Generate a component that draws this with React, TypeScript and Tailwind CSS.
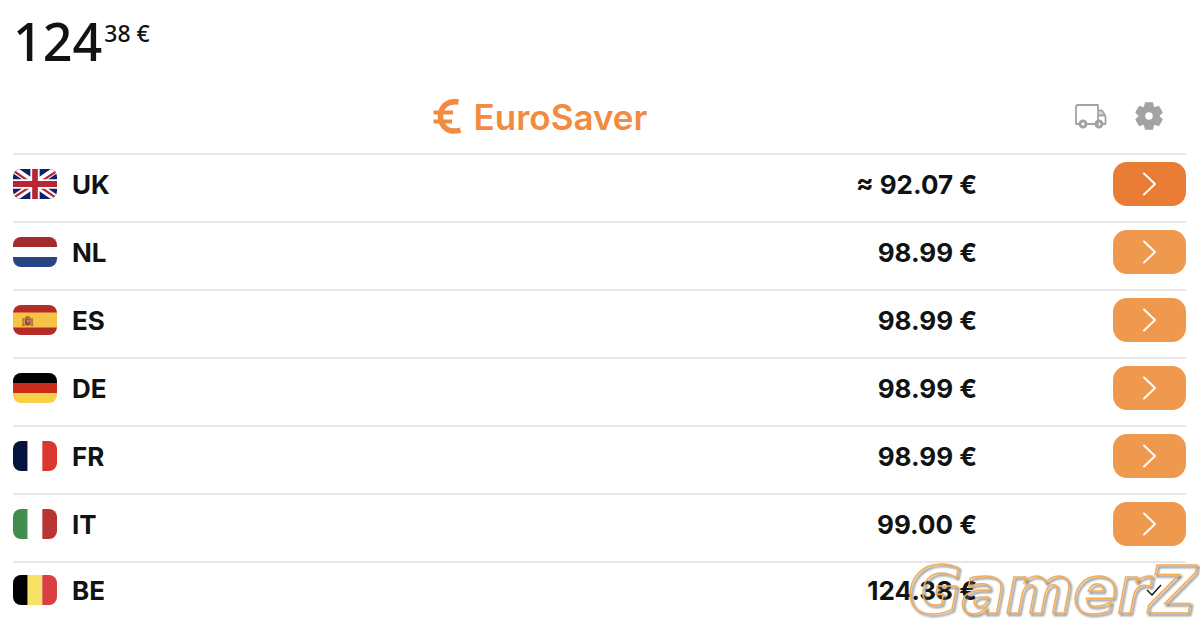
import type { ReactNode } from "react";

type Offer = { code: string; price: string; flag: ReactNode; best?: boolean; current?: boolean };

function Stripes({ colors, vertical }: { colors: string[]; vertical?: boolean }) {
  return (
    <>
      {colors.map((c, i) =>
        vertical ? (
          <rect key={i} x={i * 15} y="0" width="15" height="30" fill={c} />
        ) : (
          <rect key={i} x="0" y={i * 10} width="45" height="10" fill={c} />
        ),
      )}
    </>
  );
}

function UnionJack() {
  return (
    <>
      <rect width="45" height="30" fill="#10206a" />
      <path d="M0 0L45 30M45 0L0 30" stroke="#fff" strokeWidth="7" />
      <path d="M0 1.5L17 13M28 18L45 29.5M45 2L28 13M17 18L0 29" stroke="#b82633" strokeWidth="2.2" />
      <path d="M22.5 0V30M0 15H45" stroke="#fff" strokeWidth="9.5" />
      <path d="M22.5 0V30M0 15H45" stroke="#b82633" strokeWidth="5.8" />
    </>
  );
}

function Spain() {
  return (
    <>
      <rect width="45" height="30" fill="#b52b28" />
      <rect y="7.5" width="45" height="15" fill="#f6c445" />
      <path d="M12 12.5q3-3.5 6 0v2h-6z" fill="#b5703a" />
      <path d="M9.5 13h2v7.5h-2zM18.5 13h2v7.5h-2z" fill="#b87a48" />
      <path d="M12 14h6v4.5c0 3-6 3-6 0z" fill="#a6453a" />
      <circle cx="15.5" cy="16" r="1.5" fill="#9a8fa8" />
      <path d="M9 20.5h3M18 20.5h3" stroke="#7c7470" strokeWidth="1.2" />
    </>
  );
}

const offers: Offer[] = [
  { code: "UK", price: "≈ 92.07 €", flag: <UnionJack />, best: true },
  { code: "NL", price: "98.99 €", flag: <Stripes colors={["#a22b2e", "#ffffff", "#284684"]} /> },
  { code: "ES", price: "98.99 €", flag: <Spain /> },
  { code: "DE", price: "98.99 €", flag: <Stripes colors={["#000000", "#cb2b1d", "#f8d048"]} /> },
  { code: "FR", price: "98.99 €", flag: <Stripes vertical colors={["#07143f", "#ffffff", "#da372f"]} /> },
  { code: "IT", price: "99.00 €", flag: <Stripes vertical colors={["#418c4f", "#ffffff", "#b93433"]} /> },
  { code: "BE", price: "124.38 €", flag: <Stripes vertical colors={["#000000", "#f7e263", "#d93e42"]} />, current: true },
];

function OfferRow({ offer }: { offer: Offer }) {
  return (
    <li className={`flex items-center border-t-2 border-[#e6e6eb] ${offer.current ? "pt-[5px]" : "pt-[7px] pb-[15px]"}`}>
      <svg viewBox="0 0 45 30" preserveAspectRatio="none" className="h-[30px] w-11 rounded-lg" aria-hidden="true">
        {offer.flag}
      </svg>
      <span className="ml-[15px] pt-0.5 text-[26px] leading-8 font-bold">{offer.code}</span>
      <span className="mr-[136px] ml-auto pt-0.5 text-[26px] leading-8 font-bold">{offer.price}</span>
      {offer.current ? (
        <span className="flex h-11 w-[73px] items-center justify-center">
          <svg viewBox="0 0 16 12" className="mr-[-8px] h-3 w-4" fill="none" stroke="#111" strokeWidth="1.4" role="img" aria-label="Current store">
            <path d="M1 6l5 5L15 1" />
          </svg>
        </span>
      ) : (
        <button
          type="button"
          aria-label={`Open ${offer.code} offer`}
          className={`flex h-11 w-[73px] items-center justify-center rounded-[14px] ${offer.best ? "bg-[#e97d36]" : "bg-[#ef994f]"}`}
        >
          <svg viewBox="0 0 14 24" className="h-6 w-3.5" fill="none" stroke="#fff" strokeWidth="1.9" strokeLinecap="round" strokeLinejoin="round">
            <path d="M1 1.5L12 12L1 22.5" />
          </svg>
        </button>
      )}
    </li>
  );
}

export default function App() {
  return (
    <main className="relative overflow-hidden bg-white pr-3.5 pl-[13px] font-['Inter',sans-serif] text-[#111313]">
      <div className="flex h-20 items-start gap-0.5 pt-[7px] font-['Noto_Sans',sans-serif] font-medium">
        <span className="text-[52px] leading-[68px]">124</span>
        <span className="pt-2.5 text-[23px] leading-8">38 €</span>
      </div>
      <header className="flex h-[73px] items-center">
        <h1 className="flex flex-1 items-center justify-center gap-3 pr-2 text-[35px] leading-10 font-semibold text-[#f28b3f]">
          <svg viewBox="0 0 30 36" className="h-9 w-[30px]" fill="none" stroke="currentColor" aria-label="Euro" role="img">
            <path d="M26.5 3C15 1 8.5 8 8.5 17.500S16 35 28.5 31" strokeWidth="5.5" />
            <path d="M1.5 13.500H21M1.5 22.500H20" strokeWidth="4" />
          </svg>
          EuroSaver
        </h1>
        <div className="flex items-center justify-end gap-7 pr-[23px] pb-0.5 text-[#a3a3a3]">
          <button type="button" aria-label="Delivery">
            <svg viewBox="0 0 33 26" className="h-[26px] w-[33px]" fill="none" stroke="currentColor" strokeWidth="1.8" strokeLinejoin="round">
              <path d="M5 21H2V4q0-2 2-2H24V21H12M24 7.5h3q1 0 1.5.8l2.6 4.2q.4.6.4 1.5v7H28M25 12.5h5.5" />
              <path d="M25 8.5h2.5l2.5 4h-5z" fill="currentColor" fillOpacity=".45" stroke="none" />
              <circle cx="9" cy="21" r="3" strokeWidth="3" />
              <circle cx="25" cy="21" r="3" strokeWidth="3" />
            </svg>
          </button>
          <button type="button" aria-label="Settings">
            <svg viewBox="0 0 28 28" className="size-7" fill="none" stroke="currentColor">
              <circle cx="14" cy="14" r="7" strokeWidth="6.5" />
              <g fill="currentColor" strokeWidth="1.5" strokeLinejoin="round">
                {[0, 60, 120, 180, 240, 300].map((angle) => (
                  <path key={angle} d="M9.5 5.5L10.7 1H17.3L18.5 5.5L14 7z" transform={`rotate(${angle} 14 14)`} />
                ))}
              </g>
            </svg>
          </button>
        </div>
      </header>
      <ul>
        {offers.map((offer) => (
          <OfferRow key={offer.code} offer={offer} />
        ))}
      </ul>
      <div className="h-3" />
      <span className="pointer-events-none absolute right-1 bottom-0 font-['DejaVu_Sans',sans-serif] text-[65px] leading-[66px] font-bold text-transparent italic [-webkit-text-stroke:1.5px_#f7ac50] [filter:drop-shadow(2px_2px_1px_#666)]">
        GamerZ
      </span>
    </main>
  );
}
